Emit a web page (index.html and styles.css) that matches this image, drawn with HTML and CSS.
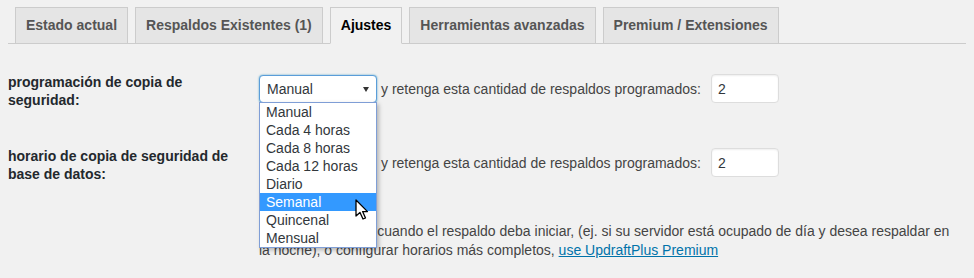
FILE: index.html
```html
<!DOCTYPE html>
<html lang="es">
<head>
  <meta charset="UTF-8">
  <title>UpdraftPlus - Ajustes</title>
  <link rel="stylesheet" href="styles.css">
</head>
<body>

<nav class="nav-tabs">
  <a class="nav-tab" href="#">Estado actual</a>
  <a class="nav-tab" href="#">Respaldos Existentes (1)</a>
  <a class="nav-tab active" href="#">Ajustes</a>
  <a class="nav-tab" href="#">Herramientas avanzadas</a>
  <a class="nav-tab" href="#">Premium / Extensiones</a>
</nav>

<div class="settings">
  <div class="row">
    <div class="row-label">programación de copia de seguridad:</div>
    <div class="row-field">
      <div class="select-wrap">
        <select class="select focused">
          <option>Manual</option>
        </select>
        <span class="select-arrow"></span>
        <ul class="dropdown">
          <li>Manual</li>
          <li>Cada 4 horas</li>
          <li>Cada 8 horas</li>
          <li>Cada 12 horas</li>
          <li>Diario</li>
          <li class="hover">Semanal</li>
          <li>Quincenal</li>
          <li>Mensual</li>
        </ul>
        <svg class="cursor" width="14" height="22" viewBox="0 0 14 22">
          <path d="M1 1 L1 17 L5 13.5 L8 20 L10.5 19 L7.6 12.6 L12.5 12.6 Z" fill="#fff" stroke="#000" stroke-width="1.3" stroke-linejoin="round"/>
        </svg>
      </div>
      <span>y retenga esta cantidad de respaldos programados:</span>
      <input class="num" type="text" value="2">
    </div>
  </div>

  <div class="row">
    <div class="row-label">horario de copia de seguridad de base de datos:</div>
    <div class="row-field">
      <div class="select-wrap">
        <select class="select">
          <option>Manual</option>
        </select>
        <span class="select-arrow"></span>
      </div>
      <span>y retenga esta cantidad de respaldos programados:</span>
      <input class="num" type="text" value="2">
    </div>
  </div>

  <div class="row">
    <div class="row-label"></div>
    <p class="note">Para fijar la hora o cuando el respaldo deba iniciar, (ej. si su servidor está ocupado de día y desea respaldar en la noche), o configurar horarios más completos, <a href="#">use UpdraftPlus Premium</a></p>
  </div>
</div>

</body>
</html>
```

FILE: styles.css
```css
body {
  font-family: 'Liberation Sans', Arial, sans-serif;
  font-size: 14px;
  color: #444;
  background: #f1f1f1;
  margin: 0 8px;
}

.nav-tabs {
  display: flex;
  gap: 7px;
  padding: 7px 0 0 7px;
  border-bottom: 1px solid #ccc;
}

.nav-tab {
  display: block;
  padding: 5px 10px 5px 10px;
  line-height: 25px;
  font-size: 14px;
  font-weight: bold;
  color: #555;
  background: #e5e5e5;
  border: 1px solid #ccc;
  border-bottom: none;
  text-decoration: none;
}

.nav-tab.active {
  color: #000;
  background: #f1f1f1;
  border-bottom: 1px solid #f1f1f1;
  margin-bottom: -1px;
}

.settings {
  padding-top: 29px;
}

.row {
  display: flex;
  align-items: flex-start;
  margin-bottom: 38px;
}

.row-label {
  width: 231px;
  padding-right: 20px;
  flex-shrink: 0;
  font-weight: bold;
  line-height: 18px;
  color: #23282d;
}

.row-field {
  display: flex;
  align-items: center;
  gap: 4px;
  margin-top: 1px;
}

.select-wrap {
  position: relative;
}

.select {
  appearance: none;
  -webkit-appearance: none;
  display: block;
  width: 118px;
  height: 28px;
  padding: 0 20px 0 7px;
  font-family: inherit;
  font-size: 14px;
  color: #32373c;
  background: #fff;
  border: 1px solid #ddd;
  border-radius: 4px;
  box-shadow: inset 0 1px 2px rgba(0,0,0,0.07);
  outline: none;
}

.select.focused {
  border-color: #5b9dd9;
  box-shadow: 0 0 2px rgba(30,140,190,0.8);
}

.select-arrow {
  position: absolute;
  right: 8px;
  top: 12px;
  border-left: 3px solid transparent;
  border-right: 3px solid transparent;
  border-top: 5px solid #333;
}

.dropdown {
  position: absolute;
  top: 27px;
  left: 0;
  width: 116px;
  margin: 0;
  padding: 0;
  list-style: none;
  background: #fff;
  border: 1px solid #7f9ed6;
  box-shadow: 2px 2px 4px rgba(0,0,0,0.25);
  z-index: 2;
  color: #32373c;
}

.dropdown li {
  height: 18px;
  line-height: 18px;
  padding-left: 6px;
}

.dropdown li.hover {
  background: #3399ff;
  color: #fff;
}

.cursor {
  position: absolute;
  left: 96px;
  top: 124px;
  z-index: 3;
}

.num {
  width: 68px;
  height: 29px;
  box-sizing: border-box;
  margin-left: 6px;
  padding: 0 6px;
  font-family: inherit;
  font-size: 14px;
  color: #32373c;
  background: #fff;
  border: 1px solid #ddd;
  border-radius: 4px;
  box-shadow: inset 0 1px 2px rgba(0,0,0,0.07);
}

.note {
  max-width: 692px;
  margin: 1px 0 0;
  line-height: 19px;
}

.note a {
  color: #0073aa;
}
```
